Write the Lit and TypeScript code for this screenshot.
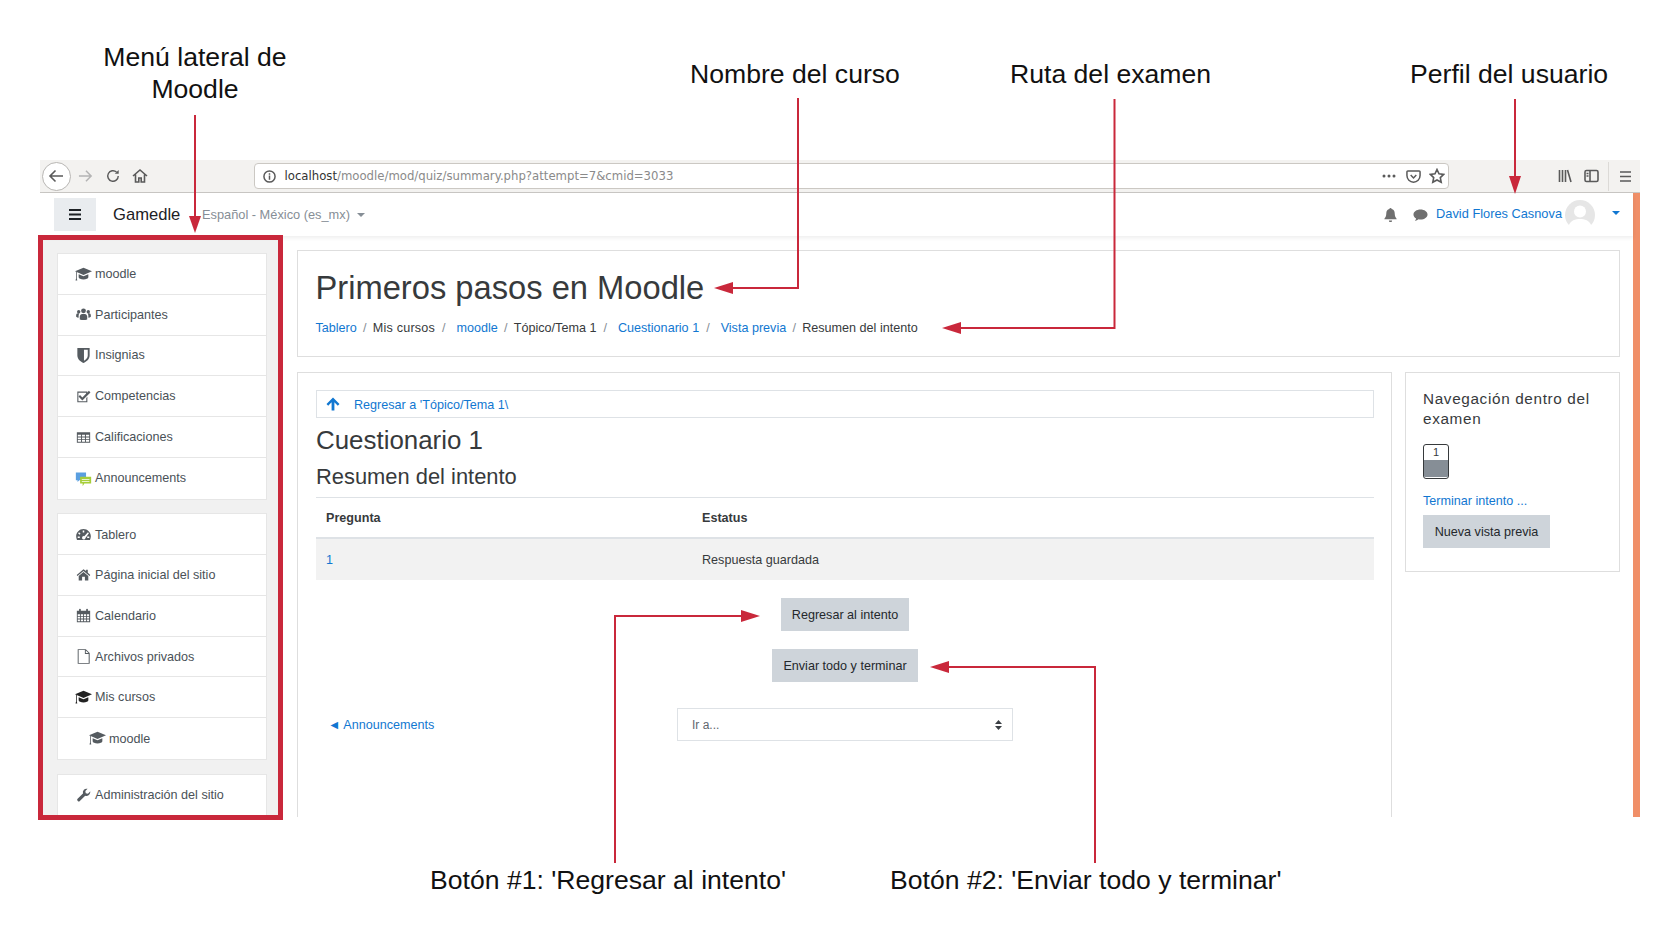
import { LitElement, css, html, svg } from 'lit';
import { customElement } from 'lit/decorators.js';

const icons: Record<string, unknown> = {
  cap: svg`<path d="M10 2 20 6.300 10 10.600 0 6.300z"/><path d="M4.300 9.600v3.600c0 1.500 2.700 2.600 5.700 2.600s5.700-1.100 5.700-2.600V9.600L10 12z"/><path d="M1.200 7.200h.9v7.400l.6 2.400H.6l.6-2.400z"/>`,
  users: svg`<circle cx="10" cy="5.200" r="3.100"/><circle cx="3.800" cy="6.400" r="2.200"/><circle cx="16.200" cy="6.400" r="2.200"/><path d="M5.200 16.500v-3.800c0-2 1.500-3.500 3-3.500h3.600c1.500 0 3 1.500 3 3.500v3.800c-3 .9-6.600.9-9.600 0z"/><path d="M.5 13V11c0-1.600 1-2.700 2.200-2.700h1.900c-.6.9-.9 2-.9 3.400v2.400C2.600 14.100 1.400 13.700.5 13z"/><path d="M19.500 13V11c0-1.600-1-2.700-2.200-2.700h-1.900c.6.9.9 2 .9 3.400v2.400c1.100 0 2.300-.4 3.200-1.100z"/>`,
  shield: svg`<path fill-rule="evenodd" d="M3.500 2h13v8c0 4-3.500 6.500-6.500 8-3-1.500-6.500-4-6.500-8zM10.500 4v11.500c2.200-1.300 4-3 4-5.500V4z"/>`,
  check: svg`<path d="M2 3.500h13v3l-1.400 1.400V5H3.400v11h10.200v-4.200l1.400-1.400v7H2z"/><path d="m5.500 8.200 3 3 8.500-8.500 2 2L8.500 15.200 3.500 10z"/>`,
  table: svg`<path fill-rule="evenodd" d="M1 3h18v14H1zm1.300 3.400v2.400h4.400V6.400zm5.700 0v2.400h4V6.400zm5.300 0v2.400h4.400V6.400zM2.300 10.100v2.100h4.400v-2.100zm5.700 0v2.100h4v-2.100zm5.300 0v2.100h4.400v-2.100zM2.300 13.500v2.200h4.400v-2.200zm5.700 0v2.200h4v-2.200zm5.300 0v2.200h4.400v-2.200z"/>`,
  gauge: svg`<path fill-rule="evenodd" d="M10 3c5.200 0 9.500 4.200 9.500 9.400 0 1.700-.4 3.200-1.100 4.600H1.600C.9 15.600.5 14.100.5 12.400.5 7.200 4.800 3 10 3zM9 4.800v2.700h2V4.800zM4.300 7.200 3 8.500l1.800 1.900 1.400-1.400zm11.400 0L11 12.200l-.5-.1a2.200 2.200 0 1 0 2 2.300l4.500-5.900zM2.500 12.500v2h2.700v-2zm12.300 0v2h2.700v-2z"/>`,
  home: svg`<path d="M10 3 .8 10.700l1 1.200L10 5.100l8.200 6.800 1-1.200-3.400-2.900V3.500h-2.300v1.900z"/><path d="m10 6.500-6.500 5.400V18h4.600v-4.800h3.800V18h4.600v-6.100z"/>`,
  calendar: svg`<path fill-rule="evenodd" d="M1 3.500h3V2a1.200 1.200 0 0 1 2.400 0v1.500h7.200V2A1.200 1.200 0 0 1 16 2v1.500h3V19H1zm1.200 4.800v2.400h3V8.300zm4.200 0v2.400h3V8.300zm4.200 0v2.400h3V8.300zm4.200 0v2.400h2.800V8.300zM2.200 11.800v2.400h3v-2.400zm4.200 0v2.400h3v-2.400zm4.200 0v2.400h3v-2.400zm4.200 0v2.400h2.800v-2.400zM2.200 15.300v2.500h3v-2.500zm4.200 0v2.500h3v-2.500zm4.200 0v2.500h3v-2.500zm4.200 0v2.500h2.800v-2.500z"/>`,
  file: svg`<path fill-rule="evenodd" d="M2.500 .5H13L18 5.500v14H2.500zm1.200 1.200v16.600h13V6.800H11.800V1.700zm9.300.5v3.400h3.400z"/>`,
  wrench: svg`<path d="M19 5.500a5 5 0 0 1-6.700 4.700L5 17.500a1.900 1.900 0 0 1-2.700 0l-.3-.3a1.900 1.900 0 0 1 0-2.700l7.300-7.300A5 5 0 0 1 15.500 1l-3 3 .5 3 3 .5 3-3c.3.400.5 1 .5 1.500z"/>`,
};

const bubbles = svg`
  <path fill="#5a9fe0" d="M1 3h12v9H5l-2 2v-2H1z"/>
  <path fill="#a6ce39" d="M6 8h13v8h-8l-2 3v-3H6z"/>
  <path fill="#fff" d="M8 10.500h9v1.200H8zM8 13h9v1.200H8z" opacity=".75"/>`;

// icons drawn smaller than the 17px slot get a wider viewBox
const iconBox: Record<string, string> = {
  users: '-1 -1 22 22',
  gauge: '-1 -1 22 22',
  shield: '1 1 18 18',
  check: '-1 -1 22 22',
  table: '-1.500 -1.500 23 23',
  home: '-1.500 -1.500 23 23',
  calendar: '-1.500 -1.500 23 23',
  file: '-1 -1 22 22',
  wrench: '-1.500 -1.500 23 23',
};

type Item = { icon: string; label: string; sub?: boolean; strong?: boolean };

const groups: Item[][] = [
  [
    { icon: 'cap', label: 'moodle' },
    { icon: 'users', label: 'Participantes' },
    { icon: 'shield', label: 'Insignias' },
    { icon: 'check', label: 'Competencias' },
    { icon: 'table', label: 'Calificaciones' },
    { icon: 'bubbles', label: 'Announcements' },
  ],
  [
    { icon: 'gauge', label: 'Tablero' },
    { icon: 'home', label: 'Página inicial del sitio' },
    { icon: 'calendar', label: 'Calendario' },
    { icon: 'file', label: 'Archivos privados' },
    { icon: 'cap', label: 'Mis cursos', strong: true },
    { icon: 'cap', label: 'moodle', sub: true },
  ],
  [{ icon: 'wrench', label: 'Administración del sitio' }],
];

const crumbs: { label: string; link?: boolean; wide?: boolean; spaced?: boolean }[] = [
  { label: 'Tablero', link: true },
  { label: 'Mis cursos', wide: true, spaced: true },
  { label: 'moodle', link: true },
  { label: 'Tópico/Tema 1', wide: true },
  { label: 'Cuestionario 1', link: true, wide: true },
  { label: 'Vista previa', link: true },
  { label: 'Resumen del intento' },
];

@customElement('app-root')
export class AppRoot extends LitElement {
  static styles = css`
    :host {
      display: block;
      position: relative;
      width: 1680px;
      height: 943px;
      overflow: hidden;
      background: #fff;
      font-family: 'Liberation Sans', Arial, sans-serif;
      font-size: 12.6px;
      color: #373a3c;
    }

    a {
      color: #1177d1;
      text-decoration: none;
    }

    /* browser window */
    .window {
      display: flex;
      flex-direction: column;
      width: 1600px;
      height: 657px;
      margin: 160px 0 0 40px;
      overflow: hidden;
    }

    .chrome {
      flex: none;
      display: flex;
      align-items: center;
      height: 33px;
      box-sizing: border-box;
      border-bottom: 1px solid #c9c7c4;
      background: #f3f2f0;
      color: #5a5a5a;
    }
    .chrome svg {
      flex: none;
      fill: none;
      stroke: currentColor;
      stroke-width: 1.6;
    }
    .back {
      flex: none;
      display: flex;
      align-items: center;
      justify-content: center;
      width: 29px;
      height: 29px;
      margin: 0 7px 0 1.500px;
      box-sizing: border-box;
      border: 1px solid #b8b6b3;
      border-radius: 50%;
      background: #fff;
    }
    .forward {
      margin-right: 13px;
      color: #b4b4b4;
    }
    .reload {
      margin-right: 12px;
    }
    .urlbar {
      flex: none;
      display: flex;
      align-items: center;
      width: 1195px;
      height: 26px;
      margin-left: 106px;
      padding: 0 3px 0 8px;
      box-sizing: border-box;
      border: 1px solid #cbc8c3;
      border-radius: 4px;
      background: #fff;
    }
    .url {
      flex: 1;
      margin-left: 9px;
      font-family: 'DejaVu Sans', sans-serif;
      font-size: 11.700px;
      color: #8a8a8a;
    }
    .url b {
      font-weight: 400;
      color: #333;
    }
    .urlbar .tools {
      display: flex;
      align-items: center;
      gap: 8px;
    }
    .urlbar .dots {
      margin-right: 2px;
    }
    .right-tools {
      display: flex;
      align-items: center;
      margin-left: 109px;
    }
    .right-tools .sidebar-icon {
      margin-left: 12px;
    }
    .right-tools .divider {
      width: 1px;
      height: 29px;
      margin: 0 11px 0 9px;
      background: #dcdad7;
    }

    .stage {
      flex: 1;
      display: flex;
      min-height: 0;
    }
    .page {
      flex: 1;
      display: flex;
      flex-direction: column;
      min-width: 0;
    }
    .scroll {
      flex: none;
      width: 7px;
      background: #f08f68;
    }

    /* moodle navbar */
    .navbar {
      position: relative;
      flex: none;
      display: flex;
      align-items: center;
      height: 43px;
      padding: 0 13px 0 14px;
      box-sizing: border-box;
      background: #fff;
      box-shadow: 0 2px 4px rgba(0, 0, 0, 0.07);
    }
    .toggle {
      display: flex;
      align-items: center;
      justify-content: center;
      width: 42px;
      height: 33px;
      margin-right: 17px;
      background: #e9ecef;
    }
    .brand {
      width: 89px;
      font-size: 16.600px;
      color: #1d2125;
    }
    .lang {
      color: #868e96;
      font-size: 12.800px;
    }
    .caret {
      display: inline-block;
      margin-left: 7px;
      border-top: 4px solid currentColor;
      border-left: 4px solid transparent;
      border-right: 4px solid transparent;
      vertical-align: 2px;
    }
    .user {
      display: flex;
      align-items: center;
      margin-left: auto;
    }
    .user .bell {
      margin-right: 15px;
    }
    .user .chat {
      margin-right: 8px;
    }
    .user .name {
      margin-right: 3px;
      font-size: 12.800px;
      transform: translateY(-1px);
    }
    .user .caret {
      margin-left: 17px;
      color: #1177d1;
      transform: translateY(-2px);
    }
    .nav-icon {
      fill: #6f6f6f;
    }

    .body {
      flex: 1;
      display: flex;
      min-height: 0;
    }

    /* sidebar */
    .side {
      flex: none;
      display: flex;
      flex-direction: column;
      gap: 13.500px;
      width: 238px;
      padding: 17px 0 0 17px;
      box-sizing: border-box;
      overflow: hidden;
      background: #f1f1f1;
    }
    .group {
      flex: none;
      width: 210px;
      box-sizing: border-box;
      border: 1px solid #e6e6e6;
      background: #fff;
    }
    .row {
      display: flex;
      align-items: center;
      gap: 3px;
      height: 40.800px;
      padding-left: 17px;
      box-sizing: border-box;
      border-bottom: 1px solid #e6e6e6;
      color: #4a5157;
    }
    .row:last-child {
      border-bottom: 0;
    }
    .row:first-child {
      padding-top: 1px;
    }
    .row.sub {
      padding-left: 31px;
    }
    .row.strong .icon {
      fill: #222;
    }
    .icon {
      flex: none;
      fill: #555b60;
    }

    /* content */
    .content {
      flex: 1;
      display: flex;
      flex-direction: column;
      min-width: 0;
      padding: 14px 13px 0 19px;
    }
    .card {
      box-sizing: border-box;
      border: 1px solid #dedede;
      background: #fff;
    }
    .head {
      flex: none;
      height: 107px;
      padding: 17px 18px 0 17.500px;
    }
    h1,
    h2,
    h3 {
      margin: 0;
      font-weight: 400;
    }
    h1 {
      font-size: 32.700px;
      line-height: 40px;
    }
    .crumbs {
      display: flex;
      align-items: center;
      height: 18px;
      margin-top: 11px;
    }
    .crumbs i {
      width: 16px;
      font-style: normal;
      text-align: center;
      color: #868e96;
    }
    .crumbs i.wide {
      width: 21.500px;
      padding-right: 4px;
      box-sizing: border-box;
    }
    .crumbs .spaced {
      letter-spacing: 0.2px;
    }

    .columns {
      flex: 1;
      display: flex;
      gap: 13px;
      min-height: 0;
      margin-top: 15px;
    }
    .main {
      flex: 1;
      min-width: 0;
      padding: 17px 17px 0 18px;
      border-bottom: 0;
    }
    .activity {
      display: flex;
      align-items: center;
      gap: 14px;
      height: 28px;
      padding: 2px 0 0 9px;
      box-sizing: border-box;
      border: 1px solid #dee2e6;
    }
    .activity svg {
      margin-top: -2px;
      fill: #1177d1;
    }
    h2 {
      margin-top: 7px;
      font-size: 25.900px;
      line-height: 30px;
    }
    h3 {
      margin-top: 9px;
      font-size: 21.900px;
      line-height: 26px;
    }
    table {
      width: 100%;
      margin-top: 7px;
      border-collapse: collapse;
    }
    th,
    td {
      padding: 0 10px;
      text-align: left;
    }
    th {
      height: 39px;
      border-top: 1px solid #dee2e6;
      border-bottom: 2px solid #dee2e6;
    }
    th:first-child {
      width: 356px;
    }
    td {
      height: 41px;
      background: #f2f2f2;
    }
    .actions {
      display: flex;
      flex-direction: column;
      align-items: center;
    }
    .btn {
      display: inline-flex;
      align-items: center;
      justify-content: center;
      height: 33px;
      box-sizing: border-box;
      padding: 0 11px;
      background: #ced4da;
      color: #24282c;
      font-size: 12.600px;
    }
    .btn.first {
      margin-top: 18px;
      padding: 0 11px;
    }
    .btn.second {
      margin-top: 18px;
      padding: 0 11px;
    }
    .jump {
      display: grid;
      grid-template-columns: 1fr 336px 1fr;
      align-items: center;
      margin-top: 26px;
    }
    .jump a {
      padding-left: 12px;
    }
    .select {
      display: flex;
      align-items: center;
      justify-content: space-between;
      height: 33px;
      padding: 0 10px 0 14px;
      box-sizing: border-box;
      border: 1px solid #dee2e6;
      color: #5f676e;
      font-size: 12px;
    }
    .select svg {
      fill: #3a3f44;
    }

    .block {
      flex: none;
      align-self: flex-start;
      width: 215px;
      height: 200px;
      padding: 16px 17px;
    }
    .block h4 {
      margin: 0;
      font-size: 15.300px;
      font-weight: 400;
      letter-spacing: 0.65px;
      line-height: 20px;
    }
    .qn {
      position: relative;
      width: 26px;
      height: 35px;
      margin-top: 15px;
      box-sizing: border-box;
      border: 1px solid #373a3c;
      border-radius: 3px;
      overflow: hidden;
      font-size: 11px;
      line-height: 15px;
      text-align: center;
    }
    .qn div {
      height: 17px;
      background: #868e96;
    }
    .block a {
      display: block;
      margin-top: 15px;
    }
    .block .btn {
      margin-top: 7px;
      width: 127px;
      padding: 0;
    }

    /* annotations drawn over the screenshot */
    .notes {
      position: absolute;
      top: 0;
      left: 0;
      width: 1680px;
      height: 943px;
      pointer-events: none;
    }
    .notes .line {
      fill: none;
      stroke: #c9283b;
      stroke-width: 2;
    }
    .notes .frame {
      fill: none;
      stroke: #c9283b;
      stroke-width: 5;
    }
    .notes .head-mark {
      fill: #c9283b;
    }
    .note {
      position: absolute;
      font-size: 26.600px;
      line-height: 32px;
      color: #111;
      white-space: nowrap;
      text-align: center;
    }
    .menu-note {
      left: 95px;
      top: 41px;
      width: 200px;
    }
    .course-note {
      left: 690px;
      top: 58px;
    }
    .route-note {
      left: 1010px;
      top: 58px;
    }
    .profile-note {
      left: 1410px;
      top: 58px;
    }
    .back-note {
      left: 430px;
      top: 864px;
    }
    .send-note {
      left: 890px;
      top: 864px;
    }
  `;

  private renderChrome() {
    return html`
      <div class="chrome">
        <div class="back">
          <svg width="16" height="16" viewBox="0 0 16 16"><path d="M15 8H2M7.500 2.500 2 8l5.500 5.500"/></svg>
        </div>
        <svg class="forward" width="15" height="16" viewBox="0 0 16 16"><path d="M1 8h13M8.500 2.500 14 8l-5.500 5.500"/></svg>
        <svg class="reload" width="14" height="16" viewBox="0 0 16 16"><path d="M14 8a6 6 0 1 1-2-4.500"/><path d="M14.500 1v4.500H10" fill="currentColor" stroke="none"/></svg>
        <svg width="16" height="16" viewBox="0 0 16 16"><path d="M1 8 8 2l7 6M3.500 6.500V14h3.300v-4h2.400v4h3.300V6.500"/></svg>
        <div class="urlbar">
          <svg width="13" height="13" viewBox="0 0 14 14" stroke-width="1"><circle cx="7" cy="7" r="6"/><path d="M7 6v4.500M7 3.500v1.500"/></svg>
          <span class="url"><b>localhost</b>/moodle/mod/quiz/summary.php?attempt=7&amp;cmid=3033</span>
          <div class="tools">
            <svg class="dots" width="14" height="4" viewBox="0 0 14 4"><g fill="currentColor" stroke="none"><circle cx="2" cy="2" r="1.500"/><circle cx="7" cy="2" r="1.500"/><circle cx="12" cy="2" r="1.500"/></g></svg>
            <svg width="15" height="15" viewBox="0 0 16 16"><path d="M2 2h12a1 1 0 0 1 1 1v4a7 7 0 0 1-14 0V3a1 1 0 0 1 1-1z"/><path d="M5 6.500 8 9.500l3-3"/></svg>
            <svg width="16" height="16" viewBox="0 0 16 16"><path d="m8 1.500 2 4.300 4.700.6-3.400 3.200.9 4.700L8 12l-4.200 2.300.9-4.700L1.300 6.400 6 5.800z"/></svg>
          </div>
        </div>
        <div class="right-tools">
          <svg width="14" height="14" viewBox="0 0 14 14"><path d="M1.500 1v12M4.500 1v12M7.500 1v12M9.500 1l3.500 12"/></svg>
          <svg class="sidebar-icon" width="15" height="14" viewBox="0 0 15 14"><rect x="1" y="1.500" width="13" height="11" rx="1.500"/><path d="M6 1.500v11M2.500 4.500h2M2.500 7h2"/></svg>
          <span class="divider"></span>
          <svg width="11" height="11" viewBox="0 0 11 11" stroke-width="1.700"><path d="M0 1h11M0 5.500h11M0 10h11"/></svg>
        </div>
      </div>
    `;
  }

  private renderNavbar() {
    return html`
      <div class="navbar">
        <div class="toggle">
          <svg width="12" height="11" viewBox="0 0 12 11"><path d="M0 0h12v2H0zM0 4.500h12v2H0zM0 9h12v2H0z" fill="#1d2125"/></svg>
        </div>
        <div class="brand">Gamedle</div>
        <div class="lang">Español - México (es_mx)<span class="caret"></span></div>
        <div class="user">
          <svg class="nav-icon bell" width="15" height="15" viewBox="0 0 16 16"><path d="M8 1a1.200 1.200 0 0 1 1.200 1.200c2.200.5 3.300 2.200 3.300 4.800 0 3 1 4.500 2 5.500v.5h-13v-.5c1-1 2-2.500 2-5.500 0-2.600 1.100-4.300 3.300-4.800A1.200 1.200 0 0 1 8 1zM6.300 14.500h3.400a1.700 1.700 0 0 1-3.400 0z"/></svg>
          <svg class="nav-icon chat" width="15" height="14" viewBox="0 0 16 14"><path d="M8 1c4.200 0 7.500 2.400 7.500 5.400S12.200 11.800 8 11.800c-.7 0-1.400-.1-2-.2-1 .9-2.400 1.500-4 1.700.7-.8 1.200-1.700 1.300-2.700C1.600 9.600.5 8.100.5 6.400.5 3.400 3.800 1 8 1z"/></svg>
          <a class="name">David Flores Casnova</a>
          <svg width="30" height="30" viewBox="0 0 30 30">
            <circle cx="15" cy="15" r="15" fill="#e6e6e6"/>
            <circle cx="15" cy="11.500" r="6" fill="#fff"/>
            <path d="M3.500 26c2-6 7-7 11.500-7s9.500 1 11.500 7a15 15 0 0 1-23 0z" fill="#fff"/>
          </svg>
          <span class="caret"></span>
        </div>
      </div>
    `;
  }

  private renderIcon(name: string) {
    return html`<svg class="icon" width="17" height="17" viewBox=${iconBox[name] ?? '0 0 20 20'}>${name === 'bubbles' ? bubbles : icons[name]}</svg>`;
  }

  private renderSide() {
    return html`
      <nav class="side">
        ${groups.map(
          (group) => html`
            <div class="group">
              ${group.map(
                (item) => html`
                  <div class="row ${item.sub ? 'sub' : ''} ${item.strong ? 'strong' : ''}">
                    ${this.renderIcon(item.icon)}<span>${item.label}</span>
                  </div>
                `,
              )}
            </div>
          `,
        )}
      </nav>
    `;
  }

  private renderContent() {
    return html`
      <div class="content">
        <header class="card head">
          <h1>Primeros pasos en Moodle</h1>
          <div class="crumbs">
            ${crumbs.map(
              (crumb, i) => html`${crumb.link ? html`<a>${crumb.label}</a>` : html`<span class=${crumb.spaced ? 'spaced' : ''}>${crumb.label}</span>`}${i < crumbs.length - 1 ? html`<i class=${crumb.wide ? 'wide' : ''}>/</i>` : ''}`,
            )}
          </div>
        </header>
        <div class="columns">
          <section class="card main">
            <div class="activity">
              <svg width="14" height="14" viewBox="0 0 14 14"><path d="M7 .5 13.500 7l-1.700 1.700L8.400 5.300V13.500H5.600V5.300L2.200 8.700.5 7z"/></svg>
              <a>Regresar a 'Tópico/Tema 1\\</a>
            </div>
            <h2>Cuestionario 1</h2>
            <h3>Resumen del intento</h3>
            <table>
              <tr><th>Pregunta</th><th>Estatus</th></tr>
              <tr><td><a>1</a></td><td>Respuesta guardada</td></tr>
            </table>
            <div class="actions">
              <div class="btn first">Regresar al intento</div>
              <div class="btn second">Enviar todo y terminar</div>
            </div>
            <div class="jump">
              <a>◄ Announcements</a>
              <div class="select">
                <span>Ir a...</span>
                <svg width="7" height="10" viewBox="0 0 7 10"><path d="M3.500 0 7 4H0zM0 6h7l-3.500 4z"/></svg>
              </div>
            </div>
          </section>
          <aside class="card block">
            <h4>Navegación dentro del examen</h4>
            <div class="qn">1<div></div></div>
            <a>Terminar intento ...</a>
            <div class="btn">Nueva vista previa</div>
          </aside>
        </div>
      </div>
    `;
  }

  private renderNotes() {
    return html`
      <svg class="notes" viewBox="0 0 1680 943">
        <rect class="frame" x="40.500" y="237.500" width="240" height="580"/>
        <path class="line" d="M195 115V218"/>
        <path class="head-mark" d="M189 216h12l-6 17z"/>
        <path class="line" d="M798 98V288H732"/>
        <path class="head-mark" d="M733 282v12l-19-6z"/>
        <path class="line" d="M1114.500 99V328H960"/>
        <path class="head-mark" d="M961 322v12l-19-6z"/>
        <path class="line" d="M1515 99V178"/>
        <path class="head-mark" d="M1509 176h12l-6 18z"/>
        <path class="line" d="M615 863V616H743"/>
        <path class="head-mark" d="M741 610v12l19-6z"/>
        <path class="line" d="M1095 863V667H947"/>
        <path class="head-mark" d="M949 661v12l-19-6z"/>
      </svg>
      <div class="note menu-note">Menú lateral de<br />Moodle</div>
      <div class="note course-note">Nombre del curso</div>
      <div class="note route-note">Ruta del examen</div>
      <div class="note profile-note">Perfil del usuario</div>
      <div class="note back-note">Botón #1: 'Regresar al intento'</div>
      <div class="note send-note">Botón #2: 'Enviar todo y terminar'</div>
    `;
  }

  render() {
    return html`
      <div class="window">
        ${this.renderChrome()}
        <div class="stage">
          <div class="page">
            ${this.renderNavbar()}
            <div class="body">${this.renderSide()} ${this.renderContent()}</div>
          </div>
          <div class="scroll"></div>
        </div>
      </div>
      ${this.renderNotes()}
    `;
  }
}
